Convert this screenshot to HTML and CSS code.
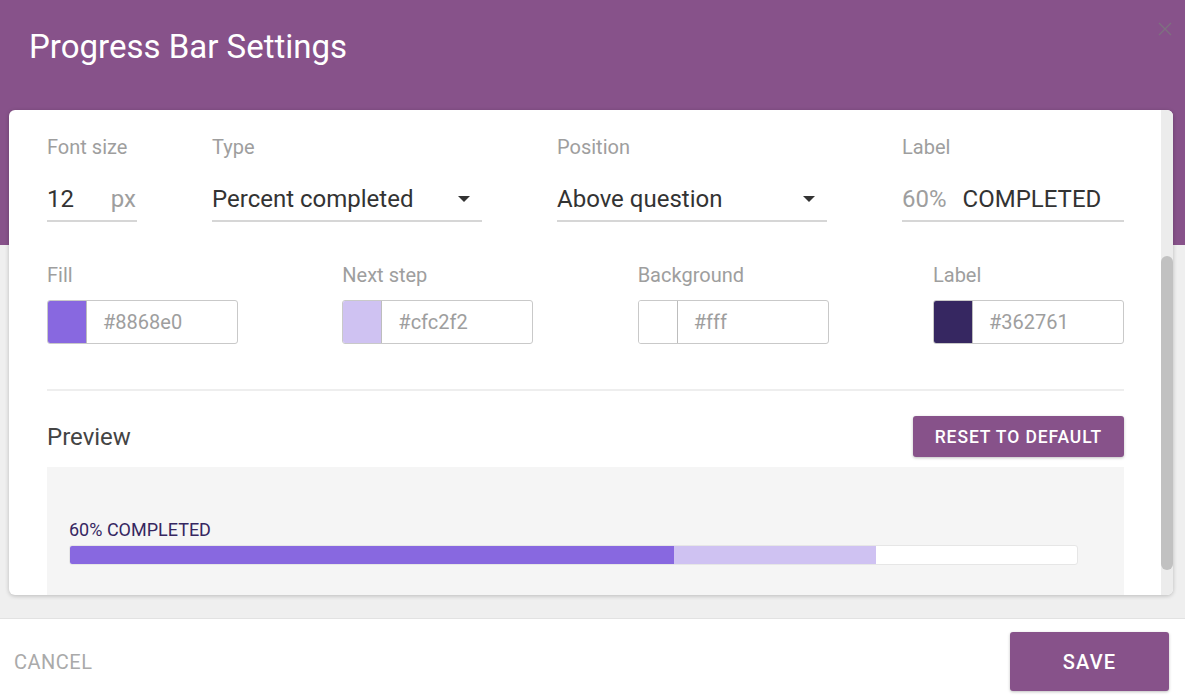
FILE: index.html
```html
<!DOCTYPE html>
<html lang="en">
  <head>
    <meta charset="UTF-8" />
    <meta name="viewport" content="width=device-width, initial-scale=1.0" />
    <title>Progress Bar Settings</title>
    <link rel="stylesheet" href="styles.css">
  </head>
  <body>
    <!-- 설정 다이얼로그 -->
    <div class="dialog">
      <!-- 상단영역 (보라 헤더 + 카드) -->
      <div class="top">
        <h1 class="title">Progress Bar Settings</h1>
        <!-- 닫기버튼 -->
        <button class="close" aria-label="close">
          <svg viewBox="0 0 16 16" width="16" height="16">
            <path d="M2 2 L14 14 M14 2 L2 14" stroke="currentColor" stroke-width="1.4" fill="none" />
          </svg>
        </button>

        <!-- 설정카드 -->
        <div class="card">
          <div class="card-body">
            <!-- 1줄: 글자크기, 타입, 위치, 라벨 -->
            <div class="row1">
              <div class="field">
                <label>Font size</label>
                <div class="line">
                  <span class="val">12</span>
                  <span class="unit">px</span>
                </div>
              </div>
              <div class="field">
                <label>Type</label>
                <div class="line sel">
                  <span class="val">Percent completed</span>
                  <i class="caret"></i>
                </div>
              </div>
              <div class="field">
                <label>Position</label>
                <div class="line sel">
                  <span class="val">Above question</span>
                  <i class="caret"></i>
                </div>
              </div>
              <div class="field">
                <label>Label</label>
                <div class="line">
                  <span class="pre">60%</span>
                  <span class="val">COMPLETED</span>
                </div>
              </div>
            </div>

            <!-- 2줄: 색상 입력 -->
            <div class="row2">
              <div class="field">
                <label>Fill</label>
                <div class="color">
                  <span class="swatch" style="background:#8868e0"></span>
                  <span class="hex">#8868e0</span>
                </div>
              </div>
              <div class="field">
                <label>Next step</label>
                <div class="color">
                  <span class="swatch" style="background:#cfc2f2"></span>
                  <span class="hex">#cfc2f2</span>
                </div>
              </div>
              <div class="field">
                <label>Background</label>
                <div class="color">
                  <span class="swatch" style="background:#fff"></span>
                  <span class="hex">#fff</span>
                </div>
              </div>
              <div class="field">
                <label>Label</label>
                <div class="color">
                  <span class="swatch" style="background:#362761"></span>
                  <span class="hex">#362761</span>
                </div>
              </div>
            </div>

            <hr class="divider">

            <!-- 미리보기 -->
            <div class="prev-head">
              <h2>Preview</h2>
              <button class="btn reset">Reset to default</button>
            </div>
            <div class="preview">
              <p class="pb-label">60% COMPLETED</p>
              <div class="pb">
                <span class="pb-fill" style="width:60%"></span>
                <span class="pb-next" style="width:20%"></span>
              </div>
            </div>
          </div>
          <!-- 스크롤바 -->
          <div class="scrollbar"><div class="thumb"></div></div>
        </div>
      </div>

      <!-- 하단 버튼영역 -->
      <div class="footer">
        <button class="cancel">Cancel</button>
        <button class="btn save">Save</button>
      </div>
    </div>
  </body>
</html>
```

FILE: styles.css
```css
html,
body {
  margin: 0;
  padding: 0;
}
body {
  overflow: hidden;
  font-family: Roboto, "Liberation Sans", sans-serif;
  background-color: #fff;
}
button {
  font-family: inherit;
  border: none;
  cursor: pointer;
}

/* 상단영역 */
.top {
  position: relative;
  height: 618px;
  padding: 0 12px 0 9px;
  background-image: linear-gradient(to bottom, #87528a 245px, #efefef 245px);
  border-bottom: 1px solid #e2e2e2;
}
.title {
  height: 110px;
  box-sizing: border-box;
  margin: 0;
  padding: 27px 0 0 20px;
  color: #fff;
  font-size: 33px;
  font-weight: 400;
  line-height: 40px;
}
/* 닫기버튼 - 우측상단 */
.close {
  position: absolute;
  top: 21px;
  right: 12px;
  padding: 0;
  background: none;
  color: #7e7080;
}
.close svg {
  display: block;
}

/* 설정카드 */
.card {
  display: flex;
  height: 485px;
  background-color: #fff;
  border-radius: 6px;
  box-shadow: 0 1px 4px rgba(0, 0, 0, 0.22);
  overflow: hidden;
}
.card-body {
  flex: 1;
  padding: 25px 37px 0 38px;
  overflow: hidden;
}
.scrollbar {
  width: 12px;
  background-color: #ececec;
}
.thumb {
  height: 314px;
  margin-top: 146px;
  background-color: #c1c1c1;
  border-radius: 6px;
}

/* 라벨 공통 */
.field label {
  display: block;
  color: #9e9e9e;
  font-size: 20px;
  line-height: 24px;
}

/* 1줄 */
.row1 {
  display: grid;
  grid-template-columns: 90px 270px 270px 222px;
  column-gap: 75px;
}
.row1 label {
  margin-bottom: 25px;
}
.line {
  display: flex;
  align-items: center;
  height: 30px;
  padding-bottom: 6px;
  border-bottom: 2px solid #d6d6d6;
  font-size: 24px;
  color: #333;
}
.line .unit {
  margin-left: auto;
  margin-right: 1px;
  color: #9e9e9e;
}
.line .pre {
  margin-right: 16px;
  color: #9e9e9e;
}
.sel {
  justify-content: space-between;
}
/* 드롭다운 화살표 */
.caret {
  width: 0;
  height: 0;
  margin-right: 12px;
  border-left: 6px solid transparent;
  border-right: 6px solid transparent;
  border-top: 6px solid #333;
}

/* 2줄 - 색상 */
.row2 {
  display: grid;
  grid-template-columns: repeat(4, 191px);
  justify-content: space-between;
  margin-top: 41px;
}
.row2 label {
  margin-bottom: 13px;
}
.color {
  display: flex;
  height: 42px;
  border: 1px solid #c9c9c9;
  border-radius: 3px;
  overflow: hidden;
}
.swatch {
  width: 38px;
  border-right: 1px solid #bdbdbd;
}
.hex {
  padding-left: 16px;
  color: #9e9e9e;
  font-size: 20px;
  line-height: 42px;
}

.divider {
  margin: 45px 0 0;
  border: none;
  border-top: 2px solid #eeeeee;
}

/* 미리보기 */
.prev-head {
  display: flex;
  justify-content: space-between;
  align-items: center;
  margin-top: 25px;
}
.prev-head h2 {
  margin: 0;
  color: #444;
  font-size: 24px;
  font-weight: 400;
}
.btn {
  background-color: #87528a;
  color: #fff;
  border-radius: 3px;
  text-transform: uppercase;
  font-weight: 500;
  box-shadow: 0 1px 3px rgba(0, 0, 0, 0.25);
}
.reset {
  height: 41px;
  padding: 0 22px;
  font-size: 17.5px;
  letter-spacing: 0.9px;
}
.preview {
  margin-top: 10px;
  padding: 52px 46px 60px 22px;
  background-color: #f5f5f5;
}
.pb-label {
  margin: 0 0 5px;
  color: #362761;
  font-size: 18px;
  line-height: 21px;
}
/* 진행바 */
.pb {
  display: flex;
  height: 18px;
  background-color: #fff;
  border: 1px solid #e6e6e6;
  border-radius: 3px;
  overflow: hidden;
}
.pb-fill {
  background-color: #8868e0;
}
.pb-next {
  background-color: #cfc2f2;
}

/* 하단 */
.footer {
  display: flex;
  justify-content: space-between;
  align-items: center;
  height: 85px;
  padding: 0 16px 0 14px;
}
.cancel {
  padding: 0;
  background: none;
  color: #aaa;
  font-size: 20px;
  letter-spacing: 0.5px;
  text-transform: uppercase;
}
.save {
  width: 159px;
  height: 59px;
  font-size: 20px;
  letter-spacing: 1.2px;
}
```
